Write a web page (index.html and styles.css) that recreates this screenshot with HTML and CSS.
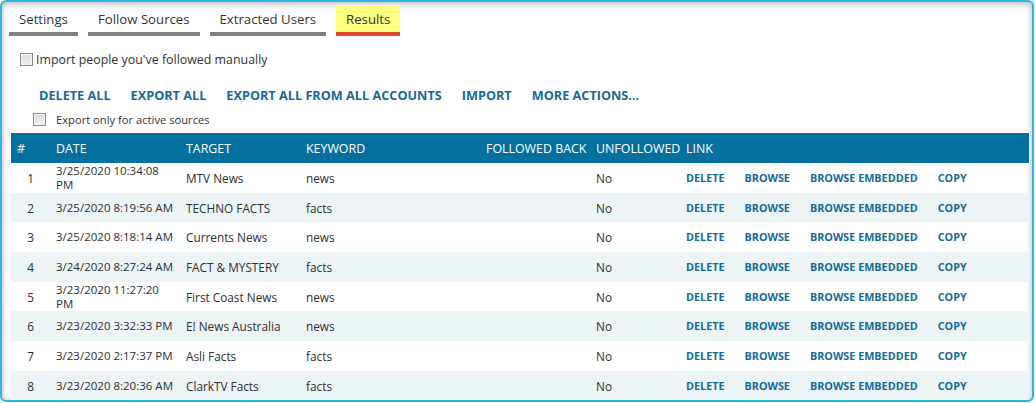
FILE: index.html
```html
<!DOCTYPE html>
<html>
<head>
<meta charset="utf-8">
<link rel="stylesheet" href="styles.css">
</head>
<body>
<div class="frame">
  <div class="tabs">
    <div class="tab">Settings</div>
    <div class="tab">Follow Sources</div>
    <div class="tab">Extracted Users</div>
    <div class="tab active">Results</div>
  </div>
  <label class="import-row"><input type="checkbox" class="cb"><span>Import people you've followed manually</span></label>
  <div class="actions">
    <a>DELETE ALL</a><a>EXPORT ALL</a><a>EXPORT ALL FROM ALL ACCOUNTS</a><a>IMPORT</a><a>MORE ACTIONS...</a>
  </div>
  <label class="export-row"><input type="checkbox" class="cb"><span>Export only for active sources</span></label>
  <table class="results">
    <colgroup>
      <col class="c-num"><col class="c-date"><col class="c-target"><col class="c-kw"><col class="c-fb"><col class="c-unf"><col>
    </colgroup>
    <thead>
      <tr><th>#</th><th>DATE</th><th>TARGET</th><th>KEYWORD</th><th>FOLLOWED BACK</th><th>UNFOLLOWED</th><th>LINK</th></tr>
    </thead>
    <tbody>
      <tr><td class="num">1</td><td class="date">3/25/2020 10:34:08<br>PM</td><td>MTV News</td><td>news</td><td></td><td>No</td><td><div class="links"><a>DELETE</a><a>BROWSE</a><a>BROWSE EMBEDDED</a><a>COPY</a></div></td></tr>
      <tr><td class="num">2</td><td class="date">3/25/2020 8:19:56 AM</td><td>TECHNO FACTS</td><td>facts</td><td></td><td>No</td><td><div class="links"><a>DELETE</a><a>BROWSE</a><a>BROWSE EMBEDDED</a><a>COPY</a></div></td></tr>
      <tr><td class="num">3</td><td class="date">3/25/2020 8:18:14 AM</td><td>Currents News</td><td>news</td><td></td><td>No</td><td><div class="links"><a>DELETE</a><a>BROWSE</a><a>BROWSE EMBEDDED</a><a>COPY</a></div></td></tr>
      <tr><td class="num">4</td><td class="date">3/24/2020 8:27:24 AM</td><td>FACT &amp; MYSTERY</td><td>facts</td><td></td><td>No</td><td><div class="links"><a>DELETE</a><a>BROWSE</a><a>BROWSE EMBEDDED</a><a>COPY</a></div></td></tr>
      <tr><td class="num">5</td><td class="date">3/23/2020 11:27:20<br>PM</td><td>First Coast News</td><td>news</td><td></td><td>No</td><td><div class="links"><a>DELETE</a><a>BROWSE</a><a>BROWSE EMBEDDED</a><a>COPY</a></div></td></tr>
      <tr><td class="num">6</td><td class="date">3/23/2020 3:32:33 PM</td><td>E! News Australia</td><td>news</td><td></td><td>No</td><td><div class="links"><a>DELETE</a><a>BROWSE</a><a>BROWSE EMBEDDED</a><a>COPY</a></div></td></tr>
      <tr><td class="num">7</td><td class="date">3/23/2020 2:17:37 PM</td><td>Asli Facts</td><td>facts</td><td></td><td>No</td><td><div class="links"><a>DELETE</a><a>BROWSE</a><a>BROWSE EMBEDDED</a><a>COPY</a></div></td></tr>
      <tr><td class="num">8</td><td class="date">3/23/2020 8:20:36 AM</td><td>ClarkTV Facts</td><td>facts</td><td></td><td>No</td><td><div class="links"><a>DELETE</a><a>BROWSE</a><a>BROWSE EMBEDDED</a><a>COPY</a></div></td></tr>
    </tbody>
  </table>
</div>
</body>
</html>
```

FILE: styles.css
```css
html, body {
  margin: 0;
  padding: 0;
  background: #ffffff;
}
body {
  font-family: "Open Sans", "Noto Sans", sans-serif;
  color: #333333;
}
.frame {
  box-sizing: border-box;
  width: 1034px;
  height: 402px;
  border: 2px solid #2fb3e8;
  border-radius: 6px;
  box-shadow: inset 0 3px 6px rgba(0, 0, 0, 0.18), inset 2px 0 4px rgba(0, 0, 0, 0.08), inset -2px 0 4px rgba(0, 0, 0, 0.08);
  padding: 3px 4px 0 9px;
  overflow: hidden;
  display: flex;
  flex-direction: column;
}
.tabs {
  display: flex;
  gap: 10px;
  margin-left: -2px;
}
.tab {
  padding: 6px 10px 4px;
  line-height: 17px;
  font-size: 13.2px;
  color: #333333;
  border-bottom: 4px solid #808080;
}
.tab.active {
  background: #ffff80;
  border-bottom-color: #df4a2d;
}
.import-row {
  display: flex;
  align-items: center;
  gap: 3px;
  margin-top: 15px;
  padding-left: 9px;
  height: 18px;
  font-size: 12.4px;
  color: #333333;
}
.cb {
  appearance: none;
  -webkit-appearance: none;
  margin: 0;
  width: 13px;
  height: 13px;
  box-sizing: border-box;
  border: 1px solid #8a8a8a;
  background: linear-gradient(#dcdcdc, #f0f0f0);
  box-shadow: inset 0 0 0 1px #f4f4f4;
}
.actions {
  display: flex;
  gap: 20px;
  margin-top: 18px;
  padding-left: 28px;
  line-height: 18px;
  font-size: 12.7px;
  font-weight: 700;
  color: #156a98;
}
.export-row {
  display: flex;
  align-items: center;
  gap: 10px;
  margin-top: 8px;
  padding-left: 22px;
  height: 14px;
  font-size: 11.2px;
  color: #333333;
}
.results {
  margin-top: 7px;
  width: 1018px;
  border-collapse: collapse;
  table-layout: fixed;
  font-size: 11.8px;
}
.c-num { width: 39px; }
.c-date { width: 130px; }
.c-target { width: 120px; }
.c-kw { width: 180px; }
.c-fb { width: 110px; }
.c-unf { width: 90px; }
.results thead tr {
  background: #03709e;
}
.results th {
  height: 30px;
  padding: 0 6px;
  text-align: left;
  font-weight: 400;
  font-size: 12.4px;
  color: #ffffff;
  white-space: nowrap;
}
.results td {
  height: 29.7px;
  padding: 0 4px 0 6px;
  line-height: 14px;
  color: #2e2e2e;
  vertical-align: middle;
}
.results td.date {
  padding-right: 0;
  font-size: 11.5px;
  white-space: nowrap;
}
.results tbody tr:nth-child(even) {
  background: #ecf4f6;
}
.results td.num {
  text-align: center;
  padding: 0;
}
.links {
  display: flex;
  gap: 20px;
  font-size: 10.8px;
  font-weight: 700;
  color: #156a98;
  white-space: nowrap;
}
```
